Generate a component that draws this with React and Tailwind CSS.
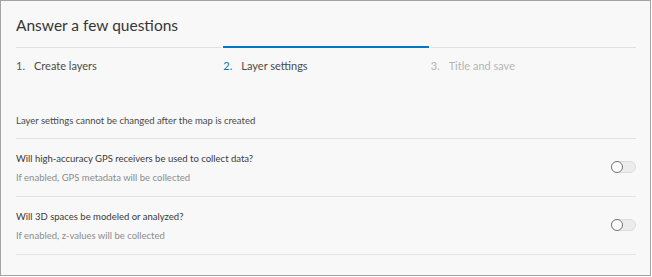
import React from 'react';

const steps = [
  { num: '1.', label: 'Create layers', state: 'done' },
  { num: '2.', label: 'Layer settings', state: 'active' },
  { num: '3.', label: 'Title and save', state: 'todo' },
];

const questions = [
  { q: 'Will high-accuracy GPS receivers be used to collect data?', hint: 'If enabled, GPS metadata will be collected' },
  { q: 'Will 3D spaces be modeled or analyzed?', hint: 'If enabled, z-values will be collected' },
];

const Toggle = () => (
  <div className="relative w-[25px] h-[12px] rounded-full bg-[#ececec] border border-[#dcdcdc] shrink-0">
    <div className="absolute -left-[1px] -top-[1px] w-[12px] h-[12px] rounded-full bg-white border-[1.5px] border-[#737373]" />
  </div>
);

const App = () => {
  return (
    <div className="w-[652px] h-[277px] bg-white">
      <div
        className="w-[651px] h-[276px] bg-[#f8f8f8] border border-[#a3a3a3] px-[15px]"
        style={{ fontFamily: 'Lato, "Noto Sans", sans-serif' }}
      >
        <h1 className="pt-[12px] h-[45px] text-[15.5px] leading-[24px] text-[#363636]">Answer a few questions</h1>

        <div className="grid grid-cols-3 gap-x-[2px] w-[620px]">
          {steps.map((s, i) => (
            <div key={i}>
              <div className={s.state === 'active' ? 'h-[2px] bg-[#0079c1]' : 'h-[2px] border-b border-[#e0e0e0]'} />
              <div className="flex items-center h-[37px] text-[11px]">
                <span
                  className={
                    s.state === 'active' ? 'text-[#0079c1] w-[18px]' : s.state === 'done' ? 'text-[#595959] w-[18px]' : 'text-[#b5b5b5] w-[18px]'
                  }
                >
                  {s.num}
                </span>
                <span className={s.state === 'todo' ? 'text-[#b5b5b5]' : 'text-[#4a4a4a]'}>{s.label}</span>
              </div>
            </div>
          ))}
        </div>

        <div className="w-[620px]">
          <p className="h-[54px] pt-[26px] text-[9.5px] leading-[20px] text-[#4a4a4a] border-b border-[#e3e3e3]">
            Layer settings cannot be changed after the map is created
          </p>
          {questions.map((item, i) => (
            <div key={i} className="h-[58px] flex items-center justify-between border-b border-[#e3e3e3]">
              <div className="pt-[1px]">
                <p className="text-[9.5px] leading-[20px] text-[#3a3a3a]">{item.q}</p>
                <p className="text-[9.5px] leading-[18px] text-[#8c8c8c]">{item.hint}</p>
              </div>
              <div className="-mt-[2px]">
                <Toggle />
              </div>
            </div>
          ))}
        </div>
      </div>
    </div>
  );
};

export default App;
